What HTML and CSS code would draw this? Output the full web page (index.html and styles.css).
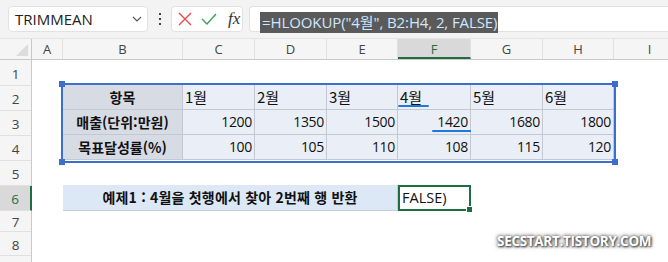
FILE: index.html
```html
<!DOCTYPE html>
<html lang="ko">
<head>
    <meta charset="UTF-8">
    <title>HLOOKUP 예제</title>
    <link rel="stylesheet" href="styles.css">
</head>
<body>
    <!-- 수식 입력줄 -->
    <div class="toolbar">
        <div class="name-box">
            <span>TRIMMEAN</span>
            <svg width="10" height="6" viewBox="0 0 10 6"><path d="M1 1 L5 5 L9 1" fill="none" stroke="#555" stroke-width="1.2"/></svg>
        </div>
        <div class="dots"><i></i><i></i><i></i></div>
        <div class="fx-box">
            <svg width="14" height="14" viewBox="0 0 14 14"><path d="M1 1 L13 13 M13 1 L1 13" stroke="#e5484d" stroke-width="1.4"/></svg>
            <svg width="16" height="14" viewBox="0 0 16 14"><path d="M1 7 L6 12 L15 2" fill="none" stroke="#3a9d5b" stroke-width="1.4"/></svg>
            <span class="fx">fx</span>
        </div>
        <div class="formula">
            <span class="formula-sel">=HLOOKUP("4월", B2:H4, 2, FALSE)</span>
        </div>
    </div>

    <!-- 시트 -->
    <div class="sheet">
        <div class="corner"><span class="corner-tri"></span></div>
        <div class="col-heads">
            <div class="col-head c-a">A</div>
            <div class="col-head c-b">B</div>
            <div class="col-head c-c">C</div>
            <div class="col-head c-d">D</div>
            <div class="col-head c-e">E</div>
            <div class="col-head c-f active">F</div>
            <div class="col-head c-g">G</div>
            <div class="col-head c-h">H</div>
            <div class="col-head c-i">I</div>
        </div>
        <div class="row-heads">
            <div class="row-head r-1">1</div>
            <div class="row-head r-2">2</div>
            <div class="row-head r-3">3</div>
            <div class="row-head r-4">4</div>
            <div class="row-head r-5">5</div>
            <div class="row-head r-6 active">6</div>
            <div class="row-head r-7">7</div>
            <div class="row-head r-8">8</div>
            <div class="row-head r-9"></div>
        </div>
        <div class="cells">
            <div class="table">
                <div class="cell label">항목</div>
                <div class="cell month">1월</div>
                <div class="cell month">2월</div>
                <div class="cell month">3월</div>
                <div class="cell month">4월<span class="mark mark-month"></span></div>
                <div class="cell month">5월</div>
                <div class="cell month">6월</div>

                <div class="cell label">매출(단위:만원)</div>
                <div class="cell num">1200</div>
                <div class="cell num">1350</div>
                <div class="cell num">1500</div>
                <div class="cell num">1420<span class="mark mark-num"></span></div>
                <div class="cell num">1680</div>
                <div class="cell num">1800</div>

                <div class="cell label">목표달성률(%)</div>
                <div class="cell num">100</div>
                <div class="cell num">105</div>
                <div class="cell num">110</div>
                <div class="cell num">108</div>
                <div class="cell num">115</div>
                <div class="cell num">120</div>

                <span class="handle h-tl"></span>
                <span class="handle h-tr"></span>
                <span class="handle h-bl"></span>
                <span class="handle h-br"></span>
            </div>
            <div class="example">예제1 : 4월을 첫행에서 찾아 2번째 행 반환</div>
            <div class="active-cell">FALSE)<span class="fill-handle"></span></div>
        </div>
    </div>

    <div class="watermark">SECSTART.TISTORY.COM</div>
</body>
</html>
```

FILE: styles.css
```css
body {
    margin: 0;
    width: 668px;
    height: 262px;
    overflow: hidden;
    position: relative;
    background: #fff;
    font-family: "Noto Sans CJK KR", "Noto Sans", sans-serif;
    color: #222;
}

/* 수식 입력줄 */
.toolbar {
    height: 39px;
    background: #f3f3f3;
    border-bottom: 1px solid #e4e4e4;
    display: flex;
    align-items: flex-start;
    padding: 6px 0 0 8px;
    box-sizing: border-box;
}

.name-box {
    width: 140px;
    height: 26px;
    box-sizing: border-box;
    background: #fff;
    border: 1px solid #e2e2e2;
    border-radius: 4px;
    display: flex;
    align-items: center;
    justify-content: space-between;
    padding: 0 5px 0 6px;
    font-family: "Open Sans", sans-serif;
    font-size: 15px;
    color: #222;
}

.dots {
    width: 23px;
    display: flex;
    flex-direction: column;
    align-items: center;
    gap: 3px;
    padding-top: 7px;
}

.dots i {
    width: 2px;
    height: 2px;
    background: #444;
}

.fx-box {
    width: 72px;
    height: 26px;
    box-sizing: border-box;
    background: #fff;
    border: 1px solid #e2e2e2;
    border-radius: 4px;
    display: flex;
    align-items: center;
    gap: 9px;
    padding-left: 6px;
}

.fx {
    font-family: "Liberation Serif", serif;
    font-style: italic;
    font-size: 17px;
    color: #333;
    margin-left: 2px;
}

.formula {
    flex: 1;
    height: 26px;
    box-sizing: border-box;
    margin-left: 6px;
    background: #fff;
    border: 1px solid #e2e2e2;
    border-right: none;
    border-radius: 4px 0 0 4px;
    padding: 2px 0 0 10px;
}

.formula-sel {
    display: inline-block;
    background: #5a5a5a;
    color: #cfe6ff;
    font-family: "Open Sans", "Noto Sans CJK KR", sans-serif;
    font-size: 15px;
    letter-spacing: -0.1px;
    line-height: 21px;
    padding: 0 1px 0 2px;
}

/* 시트 */
.sheet {
    display: grid;
    grid-template-columns: 32px 1fr;
    grid-template-rows: 21px 1fr;
}

.corner {
    background: #f5f5f5;
    border-right: 1px solid #c9c9c9;
    border-bottom: 1px solid #c9c9c9;
    position: relative;
}

.corner-tri {
    position: absolute;
    right: 3px;
    bottom: 3px;
    width: 0;
    height: 0;
    border-left: 12px solid transparent;
    border-bottom: 12px solid #dcdcdc;
}

.col-heads {
    display: flex;
    background: #f5f5f5;
    border-bottom: 1px solid #c9c9c9;
}

.col-head {
    flex: none;
    box-sizing: border-box;
    border-right: 1px solid #e0e0e0;
    text-align: center;
    font-family: "Open Sans", sans-serif;
    font-size: 13px;
    line-height: 21px;
    color: #444;
}

.col-head.active {
    background: #d9d9d9;
    color: #1e6e42;
    border-bottom: 2px solid #1e6e42;
}

.c-a { width: 31px; }
.c-b { width: 120px; }
.c-c { width: 72px; }
.c-d { width: 72px; }
.c-e { width: 71px; }
.c-f { width: 73px; }
.c-g { width: 72px; }
.c-h { width: 71px; }
.c-i { width: 72px; }

.row-heads {
    display: flex;
    flex-direction: column;
    background: #f5f5f5;
    border-right: 1px solid #c9c9c9;
}

.row-head {
    box-sizing: border-box;
    border-bottom: 1px solid #e0e0e0;
    text-align: center;
    font-family: "Open Sans", sans-serif;
    font-size: 13.5px;
    color: #444;
    display: flex;
    align-items: center;
    justify-content: center;
    padding-top: 2px;
}

.row-head.active {
    background: #d9d9d9;
    color: #1e6e42;
    margin-right: -1px;
    border-right: 2px solid #1e6e42;
}

.r-1 { height: 26px; }
.r-2, .r-3, .r-4, .r-5, .r-6 { height: 25px; }
.r-7 { height: 21px; }
.r-8 { height: 24px; }
.r-9 { height: 10px; }

.cells {
    display: grid;
    grid-template-columns: 31px 120px 72px 72px 71px 73px 72px 71px 72px;
    grid-template-rows: 26px 25px 25px 25px 25px 25px 21px 24px;
}

/* 데이터 표 */
.table {
    grid-column: 2 / 9;
    grid-row: 2 / 5;
    display: grid;
    grid-template-columns: 120px 72px 72px 71px 73px 72px 71px;
    grid-template-rows: 25px 25px 25px;
    position: relative;
    outline: 2px solid #3b6fcb;
    outline-offset: 0;
    margin-top: -1px;
}

.cell {
    position: relative;
    box-sizing: border-box;
    border-right: 1px solid #c3c8d2;
    border-bottom: 1px solid #c3c8d2;
    background: #eaeef7;
    font-size: 14px;
    line-height: 24px;
    color: #111;
    padding: 0 2px;
    white-space: nowrap;
}

.label {
    background: #d7dbe4;
    font-weight: bold;
    text-align: center;
}

.month {
    font-size: 15px;
}

.num {
    text-align: right;
    font-family: "Open Sans", sans-serif;
    letter-spacing: -0.3px;
}

.mark {
    position: absolute;
    height: 2px;
    background: #2277dd;
    border-radius: 1px;
}

.mark-month {
    left: 0;
    bottom: 2px;
    width: 31px;
}

.mark-num {
    left: 34px;
    bottom: 2px;
    width: 40px;
}

.handle {
    position: absolute;
    width: 6px;
    height: 6px;
    background: #3b6fcb;
}

.h-tl { left: -4px; top: -4px; }
.h-tr { right: -4px; top: -4px; }
.h-bl { left: -4px; bottom: -4px; }
.h-br { right: -4px; bottom: -4px; }

/* 예제 행 */
.example {
    grid-column: 2 / 6;
    grid-row: 6;
    box-sizing: border-box;
    background: #dce8f6;
    border-right: 1px solid #c8ccd2;
    border-bottom: 1px solid #c8ccd2;
    font-size: 14px;
    font-weight: bold;
    letter-spacing: 0.2px;
    text-align: center;
    line-height: 24px;
    margin-top: -1px;
    color: #111;
}

.active-cell {
    grid-column: 6;
    grid-row: 6;
    position: relative;
    box-sizing: border-box;
    border: 2px solid #1e6e42;
    margin-top: -1px;
    font-family: "Open Sans", sans-serif;
    font-size: 14.5px;
    line-height: 22px;
    padding-left: 2px;
    color: #111;
}

.fill-handle {
    position: absolute;
    right: -4px;
    bottom: -4px;
    width: 5px;
    height: 5px;
    background: #1e6e42;
    border: 1px solid #fff;
}

.watermark {
    position: absolute;
    left: 497px;
    top: 232px;
    font-family: "Open Sans", sans-serif;
    font-weight: bold;
    font-size: 13.5px;
    letter-spacing: -0.3px;
    color: #fff;
    text-shadow: 0 0 3px #555, 1px 1px 2px #444, 0 0 5px #777;
}
```
